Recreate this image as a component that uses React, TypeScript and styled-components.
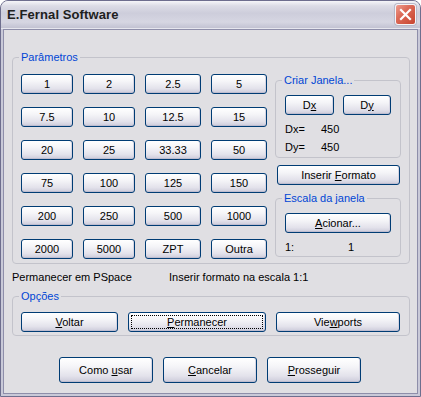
import styled, { createGlobalStyle } from 'styled-components';

const GlobalStyle = createGlobalStyle`
  html, body {
    margin: 0;
    padding: 0;
    background: #ffffff;
  }
  body {
    font-family: 'Liberation Sans', Arial, sans-serif;
    font-size: 11px;
    color: #000000;
  }
  * {
    box-sizing: border-box;
  }
`;

const Window = styled.div`
  width: 421px;
  height: 397px;
  display: flex;
  flex-direction: column;
  border: 1px solid #6e6e8e;
  border-radius: 8px 8px 0 0;
  overflow: hidden;
  background: #c9c9d8;
`;

const TitleBar = styled.div`
  height: 28px;
  flex: none;
  display: flex;
  align-items: center;
  justify-content: space-between;
  padding: 0 4px 0 6px;
  background: linear-gradient(
    to bottom,
    #f6f6f9 0%,
    #dcdce6 18%,
    #cdcddb 45%,
    #d6d6e2 78%,
    #c2c2d2 100%
  );
  border-bottom: 1px solid #e6e6ee;
`;

const Title = styled.span`
  font-family: 'Liberation Sans', Arial, sans-serif;
  font-size: 13px;
  font-weight: bold;
  color: #202020;
  letter-spacing: 0.1px;
`;

const CloseButton = styled.div`
  width: 21px;
  height: 21px;
  display: flex;
  align-items: center;
  justify-content: center;
  border: 1px solid #f4f4f8;
  border-radius: 3px;
  background: linear-gradient(135deg, #ee9c8e 0%, #dc6a58 40%, #c8442f 100%);
  box-shadow: 0 0 0 1px #b8b8c8;
`;

const Frame = styled.div`
  flex: 1;
  display: flex;
  padding: 0 2px 2px;
`;

const Client = styled.div`
  flex: 1;
  display: flex;
  flex-direction: column;
  border: 1px solid #8e8eaa;
  background: #e0dfe3;
  padding: 21px 7px 0 8px;
`;

const Group = styled.fieldset<{ $pad: string }>`
  margin: 0;
  min-width: 0;
  padding: ${(p) => p.$pad};
  border: 1px solid #c3c3cb;
  border-radius: 4px;
`;

const Legend = styled.legend<{ $shift: number }>`
  padding: 0 2px;
  margin-left: ${(p) => p.$shift}px;
  font-size: 11px;
  line-height: 13px;
  color: #0046d5;
`;

const ParamsBody = styled.div`
  display: flex;
  align-items: flex-start;
  gap: 8px;
`;

const ScaleGrid = styled.div`
  display: grid;
  grid-template-columns: 52px 52px 56px 56px;
  grid-auto-rows: 20px;
  column-gap: 10px;
  row-gap: 13px;
`;

const SideColumn = styled.div`
  width: 126px;
  display: flex;
  flex-direction: column;
`;

const XPButton = styled.button<{ $w?: number; $h?: number; $focus?: boolean }>`
  width: ${(p) => (p.$w ? `${p.$w}px` : '100%')};
  height: ${(p) => p.$h ?? 20}px;
  margin: 0;
  padding: 0;
  font-family: 'Liberation Sans', Arial, sans-serif;
  font-size: 11px;
  line-height: 13px;
  color: #000000;
  border: 1px solid #003c74;
  border-radius: 3px;
  background: linear-gradient(
    to bottom,
    #ffffff 0%,
    #f5f5f8 35%,
    #e3e2eb 75%,
    #cccbda 100%
  );
  box-shadow: inset 0 -1px 0 #bebdd0, inset -1px 0 0 #d6d5e2;
  outline: ${(p) => (p.$focus ? '1px dotted #000000' : 'none')};
  outline-offset: -4px;

  u {
    text-decoration: underline;
    text-underline-offset: 1px;
  }
`;

const PairRow = styled.div`
  display: flex;
  gap: 9px;
`;

const ValueList = styled.div<{ $label: number }>`
  margin-top: 8px;
  display: grid;
  grid-template-columns: ${(p) => p.$label}px auto;
  row-gap: 5px;
  line-height: 13px;
`;

const WideButtonSlot = styled.div<{ $top: number; $left: number }>`
  margin-top: ${(p) => p.$top}px;
  margin-left: ${(p) => p.$left}px;
`;

const SubGroupSpacer = styled.div`
  margin-top: 7px;
`;

const StatusRow = styled.div`
  margin-top: 7px;
  display: grid;
  grid-template-columns: 157px auto;
  line-height: 13px;
`;

const OptionsSpacer = styled.div`
  margin-top: 6px;
`;

const OptionsRow = styled.div`
  display: grid;
  grid-template-columns: 97px 138px 124px;
  column-gap: 10px;
`;

const FooterRow = styled.div`
  margin-top: 21px;
  display: flex;
  justify-content: center;
  gap: 10px;
  padding-right: 2px;
`;

const scales = [
  '1', '2', '2.5', '5',
  '7.5', '10', '12.5', '15',
  '20', '25', '33.33', '50',
  '75', '100', '125', '150',
  '200', '250', '500', '1000',
  '2000', '5000', 'ZPT', 'Outra',
];

const CloseIcon = () => (
  <svg width="13" height="13" viewBox="0 0 13 13">
    <path d="M2 2 L11 11 M11 2 L2 11" stroke="#ffffff" strokeWidth="2.2" strokeLinecap="square" />
  </svg>
);

export default function App() {
  return (
    <>
      <GlobalStyle />
      <Window>
        <TitleBar>
          <Title>E.Fernal Software</Title>
          <CloseButton>
            <CloseIcon />
          </CloseButton>
        </TitleBar>
        <Frame>
          <Client>
            <Group $pad="10px 8px 4px 8px">
              <Legend $shift={-2}>Parâmetros</Legend>
              <ParamsBody>
                <ScaleGrid>
                  {scales.map((s) => (
                    <XPButton key={s}>{s}</XPButton>
                  ))}
                </ScaleGrid>
                <SideColumn>
                  <Group $pad="8px 9px 3px 9px">
                    <Legend $shift={-3}>Criar Janela...</Legend>
                    <PairRow>
                      <XPButton $w={49}>D<u>x</u></XPButton>
                      <XPButton $w={48}>D<u>y</u></XPButton>
                    </PairRow>
                    <ValueList $label={36}>
                      <span>Dx=</span>
                      <span>450</span>
                      <span>Dy=</span>
                      <span>450</span>
                    </ValueList>
                  </Group>
                  <WideButtonSlot $top={7} $left={2}>
                    <XPButton $w={123}>Inserir <u>F</u>ormato</XPButton>
                  </WideButtonSlot>
                  <SubGroupSpacer>
                    <Group $pad="8px 9px 2px 9px">
                      <Legend $shift={-3}>Escala da janela</Legend>
                      <XPButton $w={106}><u>A</u>cionar...</XPButton>
                      <ValueList $label={63}>
                        <span>1:</span>
                        <span>1</span>
                      </ValueList>
                    </Group>
                  </SubGroupSpacer>
                </SideColumn>
              </ParamsBody>
            </Group>

            <StatusRow>
              <span>Permanecer em PSpace</span>
              <span>Inserir formato na escala 1:1</span>
            </StatusRow>

            <OptionsSpacer>
              <Group $pad="9px 8px 3px 8px">
                <Legend $shift={-2}>Opções</Legend>
                <OptionsRow>
                  <XPButton><u>V</u>oltar</XPButton>
                  <XPButton $focus><u>P</u>ermanecer</XPButton>
                  <XPButton>Vie<u>w</u>ports</XPButton>
                </OptionsRow>
              </Group>
            </OptionsSpacer>

            <FooterRow>
              <XPButton $w={94} $h={26}>Como <u>u</u>sar</XPButton>
              <XPButton $w={94} $h={26}><u>C</u>ancelar</XPButton>
              <XPButton $w={94} $h={26}><u>P</u>rosseguir</XPButton>
            </FooterRow>
          </Client>
        </Frame>
      </Window>
    </>
  );
}
